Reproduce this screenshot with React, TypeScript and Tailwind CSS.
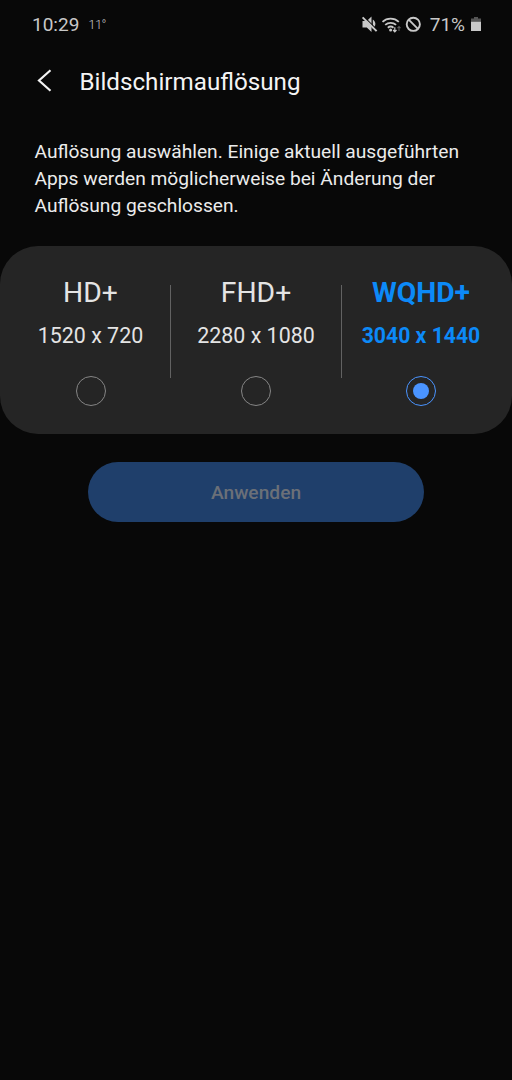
import { useState } from 'react'

const resolutions = [
  { name: 'HD+', size: '1520 x 720' },
  { name: 'FHD+', size: '2280 x 1080' },
  { name: 'WQHD+', size: '3040 x 1440' },
]

function StatusIcons() {
  return (
    <svg width="66" height="20" viewBox="0 0 66 20" fill="none" className="text-[#c8c8c8]">
      {/* muted speaker */}
      <path d="M1.500 6h4.300l4.700-4.500v15.500L5.800 12.500H1.500z" fill="currentColor" />
      <path d="M11.800 4.500c3.400 2 3.400 7 0 9z" fill="currentColor" />
      <path d="M3 1.900l13 12.700" stroke="#080808" strokeWidth="1.200" />
      <path d="M1.600 2.400l14 13.700" stroke="currentColor" strokeWidth="2" />
      {/* wifi */}
      <path d="M21.500 6.800c4.600-4.300 11.700-4.300 16.300 0M24.200 9.900c3.100-2.800 7.800-2.800 10.900 0M26.800 12.700c1.700-1.400 4-1.400 5.700 0" stroke="currentColor" strokeWidth="1.800" />
      <circle cx="29.600" cy="15" r="1.500" fill="currentColor" />
      <path d="M33.800 12.300v4.500M32.100 15l1.700 1.900 1.700-1.900" stroke="currentColor" strokeWidth="1.200" />
      <path d="M38 16v-4.500M36.500 13.200l1.500-1.700 1.500 1.700" stroke="#5c5c5c" strokeWidth="1.100" />
      {/* blocked */}
      <circle cx="52.300" cy="9.300" r="6.600" stroke="currentColor" strokeWidth="1.900" />
      <path d="M47.700 4.700l9.200 9.200" stroke="currentColor" strokeWidth="1.900" />
    </svg>
  )
}

function StatusBar() {
  return (
    <div className="flex h-[49px] items-center pl-8 pr-[31px] text-[#c8c8c8]">
      <span className="mt-0.5 text-[19px]">10:29</span>
      <span className="ml-[9px] text-[13px] font-light tracking-[-0.6px]">11°</span>
      <div className="ml-auto flex items-center">
        <StatusIcons />
        <span className="ml-[3px] mt-px text-[19px]">71%</span>
        <svg width="10" height="15" viewBox="0 0 10 15" className="ml-1.5">
          <path d="M3 0h4v2H3zM0 1.500h10V5H0z" fill="#555" />
          <path d="M0 4.800h10V14H0z" fill="#c8c8c8" />
        </svg>
      </div>
    </div>
  )
}

export default function App() {
  const [selected, setSelected] = useState('WQHD+')

  return (
    <div className="min-h-screen bg-[#080808] font-['Roboto',sans-serif] text-[#ececec]">
      <StatusBar />

      <header className="flex h-16 items-center pl-[37px]">
        <button aria-label="Zurück">
          <svg width="16" height="24" viewBox="0 0 16 24" fill="none">
            <path d="M13.500 1.200L2 11.500l11.500 10.300" stroke="#f2f2f2" strokeWidth="2.200" />
          </svg>
        </button>
        <h1 className="ml-[26.5px] mt-0.5 text-[24.2px] text-[#f4f4f4]">Bildschirmauflösung</h1>
      </header>

      <p className="h-[133px] pl-[34.5px] pr-10 pt-[24.500px] text-[19.2px] leading-[27.3px]">
        Auflösung auswählen. Einige aktuell ausgeführten Apps werden möglicherweise bei Änderung der
        Auflösung geschlossen.
      </p>

      <div className="flex h-[188px] justify-center rounded-[38px] bg-[#252525]">
        {resolutions.map((res, i) => {
          const active = res.name === selected
          return (
            <div key={res.name} className="flex">
              {i > 0 && <div className="mt-[39px] h-[93px] w-px bg-[#626262]" />}
              <button
                onClick={() => setSelected(res.name)}
                className={`flex flex-col items-center pt-[31px] ${i === 1 ? 'w-[170px]' : 'w-40'} ${i === 0 ? 'pl-px' : ''} ${i === 2 ? 'pr-0.5' : ''} ${active ? 'font-bold text-[#0c8af8]' : 'text-[#e4e4e4]'}`}
              >
                <span className="text-[28.3px] leading-8">{res.name}</span>
                <span className={`mt-[15px] leading-6 ${active ? 'text-[21.2px]' : 'text-[21.4px]'}`}>{res.size}</span>
                <span
                  className={`mt-7 flex size-[30px] items-center justify-center rounded-full border-[1.5px] ${active ? 'border-[#4a94ff]' : 'border-[#858585]'}`}
                >
                  {active && <span className="size-4 rounded-full bg-[#4a94ff]" />}
                </span>
              </button>
            </div>
          )
        })}
      </div>

      <button className="mx-auto mt-7 flex h-[60px] w-[336px] items-center justify-center rounded-full bg-[#1f3f6b] pt-0.5 text-[19.2px] font-medium text-[#6b7078]">
        Anwenden
      </button>
    </div>
  )
}
